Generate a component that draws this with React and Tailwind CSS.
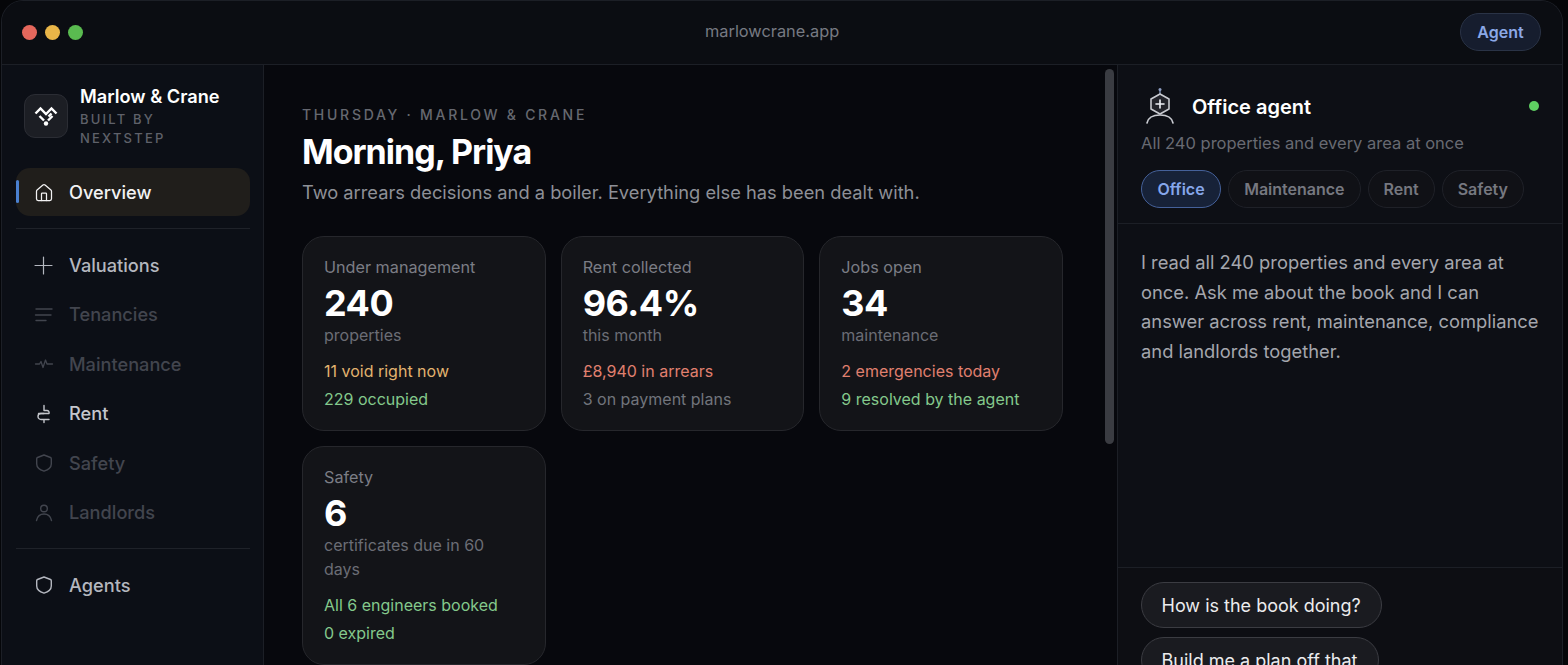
import { House, Plus } from "lucide-react";

const navTop = [
  { label: "Valuations", icon: Plus, tone: "text-[#b4b7bf]", size: 29, sw: 1 },
  { label: "Tenancies", icon: LinesIcon, tone: "text-[#42454e]", size: 20, sw: 1.4 },
  { label: "Maintenance", icon: PulseIcon, tone: "text-[#42454e]", size: 20, sw: 1.3 },
  { label: "Rent", icon: RentIcon, tone: "text-[#c4c6cc]", size: 20, sw: 1.4 },
  { label: "Safety", icon: ShieldIcon, tone: "text-[#42454e]", size: 20, sw: 1.4 },
  { label: "Landlords", icon: PersonIcon, tone: "text-[#42454e]", size: 20, sw: 1.4 },
];

const cards = [
  {
    label: "Under management",
    value: "240",
    sub: "properties",
    lines: [
      ["11 void right now", "text-[#e2b36f]"],
      ["229 occupied", "text-[#84c98c]"],
    ],
  },
  {
    label: "Rent collected",
    value: "96.4%",
    sub: "this month",
    lines: [
      ["£8,940 in arrears", "text-[#e0806f]"],
      ["3 on payment plans", "text-[#71747c]"],
    ],
  },
  {
    label: "Jobs open",
    value: "34",
    sub: "maintenance",
    lines: [
      ["2 emergencies today", "text-[#e0806f]"],
      ["9 resolved by the agent", "text-[#84c98c]"],
    ],
  },
  {
    label: "Safety",
    value: "6",
    sub: "certificates due in 60 days",
    lines: [
      ["All 6 engineers booked", "text-[#84c98c]"],
      ["0 expired", "text-[#84c98c]"],
    ],
  },
];

const tabs = ["Maintenance", "Rent", "Safety"];

function IconBase({ size, strokeWidth, children }) {
  return (
    <svg width={size} height={size} viewBox="0 0 20 20" fill="none" stroke="currentColor" strokeWidth={strokeWidth} strokeLinecap="round" strokeLinejoin="round">
      {children}
    </svg>
  );
}

function LinesIcon(props) {
  return (
    <IconBase {...props}>
      <path d="M2 4h16M1.5 10h15.5M2 15.5h10" />
    </IconBase>
  );
}

function PulseIcon(props) {
  return (
    <IconBase {...props}>
      <path d="M1.5 10h4l1.5-2.5 2 6 2.5-7.5 1.5 4h5.5" />
    </IconBase>
  );
}

function RentIcon(props) {
  return (
    <IconBase {...props}>
      <path d="M10 1.5v5M4.5 9.5h10.5c.5-1.5-.5-3-2-3h-3" />
      <path d="M10 9.5H7a3 3 0 0 0 0 6h8M10 15.5v3" />
    </IconBase>
  );
}

function ShieldIcon(props) {
  return (
    <IconBase {...props}>
      <path d="M10 2l6.5 2.5c.5.2.8.6.8 1.2V11c0 3.5-3.5 6-7.3 7.2C6.2 17 2.7 14.5 2.7 11V5.7c0-.6.3-1 .8-1.2z" />
    </IconBase>
  );
}

function PersonIcon(props) {
  return (
    <IconBase {...props}>
      <circle cx="10" cy="5.5" r="3.3" />
      <path d="M2.5 17.5C3.5 13 6.5 11 10 11s6.5 2 7.5 6.5" />
    </IconBase>
  );
}

function Logo() {
  return (
    <svg width="24" height="22" viewBox="0 0 24 22" fill="none" stroke="white" strokeWidth="2.4" strokeLinejoin="miter">
      <path d="M1.5 8.500 6.500 3.500 12 9l5.500-5.500 5 5" />
      <path d="M5.500 11 10 15.500" />
      <path d="M18.500 11 14 15.500" />
      <path d="M17.500 8.500 14.500 11.500" />
      <circle cx="12" cy="18.500" r="2.200" fill="white" stroke="none" />
    </svg>
  );
}

function AgentIcon() {
  return (
    <svg width="28" height="36" viewBox="6 6 28 36" fill="none" stroke="#c8cad0" strokeWidth="1.6" strokeLinecap="round" strokeLinejoin="round" className="ml-[5px]">
      <path d="M20 8v4" stroke="#6f7f9f" />
      <circle cx="20" cy="7.500" r="1.500" fill="#8f9fc4" stroke="none" />
      <path d="M20 12l9 5v10l-9 5-9-5V17z" fill="#22232a" />
      <path d="M20 18v8M16 22h8" stroke="#f0f2f8" strokeWidth="1.600" />
      <path d="M7 41c1-5 6-8 13-8s12 3 13 8" />
    </svg>
  );
}

function NavItem({ label, icon: Icon, tone, size, sw }) {
  return (
    <div className={`flex h-[49.5px] items-center text-[18.2px] font-medium ${tone}`}>
      <span className="flex w-[53px] justify-center pl-[2px]">
        <Icon size={size} strokeWidth={sw} />
      </span>
      <span>{label}</span>
    </div>
  );
}

function StatCard({ label, value, sub, lines }) {
  return (
    <div className="rounded-[22px] border border-[#26272c] bg-[#131418] pt-[20px] pr-[26px] pb-[21px] pl-[21px]">
      <div className="text-[16.2px] leading-[20px] text-[#7b7d85]">{label}</div>
      <div className="mt-[6px] text-[36px] leading-[40px] font-bold tracking-[-0.5px] text-white">{value}</div>
      <div className="text-[16px] leading-[24px] text-[#6b6d75]">{sub}</div>
      <div className="mt-[14px] flex flex-col gap-[8px]">
        {lines.map(([text, color]) => (
          <div key={text} className={`text-[16px] leading-[20px] whitespace-nowrap ${color}`}>
            {text}
          </div>
        ))}
      </div>
    </div>
  );
}

export default function App() {
  return (
    <div className="h-[665px] overflow-hidden bg-[#050609] pr-[5px] pl-[1px] font-['Inter',sans-serif]">
      <div className="flex h-[700px] flex-col overflow-hidden rounded-t-[22px] border border-b-0 border-[#1c1f26] bg-[#0b0d13]">
        <header className="relative flex h-[64px] shrink-0 items-center justify-between border-b border-[#1c1f26] bg-[#0b0d12] pr-[21px] pb-[1px] pl-[20px]">
          <div className="flex gap-[8px]">
            <span className="h-[15px] w-[15px] rounded-full bg-[#e5675c]" />
            <span className="h-[15px] w-[15px] rounded-full bg-[#e9b548]" />
            <span className="h-[15px] w-[15px] rounded-full bg-[#5abb50]" />
          </div>
          <div className="absolute top-[19px] left-[703px] text-[16.35px] leading-[22px] text-[#777a82]">marlowcrane.app</div>
          <button className="flex h-[38px] w-[81px] items-center justify-center rounded-full border border-[#2a3346] bg-[#161d2e] text-[16px] font-semibold text-[#8ba8e6]">
            Agent
          </button>
        </header>

        <div className="flex min-h-0 flex-1">
          <aside className="flex w-[262px] shrink-0 flex-col border-r border-[#1c1f26] bg-[#0c0f16] pr-[13px] pl-[14px]">
            <div className="flex items-start gap-[12px] pt-[20.5px] pl-[8px]">
              <div className="mt-[8px] flex h-[44px] w-[44px] shrink-0 items-center justify-center rounded-[11px] border border-[#2b2d34] bg-[#1c1e24]">
                <Logo />
              </div>
              <div>
                <div className="text-[18.2px] leading-[20px] font-semibold text-white">Marlow &amp; Crane</div>
                <div className="mt-[4px] w-[120px] text-[13px] leading-[19px] font-medium tracking-[0.17em] text-[#5f616a]">BUILT BY NEXTSTEP</div>
              </div>
            </div>

            <div className="relative mt-[20.5px] flex h-[48px] items-center rounded-[14px] bg-[#201e1b] pt-[1px] text-[18.2px] font-medium text-[#f2f2f3]">
              <span className="absolute top-[12px] left-0 h-[23px] w-[3px] rounded-full bg-[#4a80d0]" />
              <span className="flex w-[53px] justify-center pl-[2px]">
                <House size={20} strokeWidth={1.5} />
              </span>
              <span>Overview</span>
            </div>

            <div className="mt-[12px] mb-[11.5px] h-px bg-[#1f2229]" />

            <nav>
              {navTop.map((item) => (
                <NavItem key={item.label} {...item} />
              ))}
            </nav>

            <div className="mt-[10px] mb-[12px] h-px bg-[#1f2229]" />

            <NavItem label="Agents" icon={ShieldIcon} tone="text-[#b4b7bf]" size={20} sw={1.4} />
          </aside>

          <main className="relative min-w-0 flex-1 bg-[#07080d] pt-[41px] pr-[54px] pl-[38px]">
            <div className="text-[14px] leading-[18px] font-medium tracking-[0.195em] text-[#666870]">THURSDAY · MARLOW &amp; CRANE</div>
            <h1 className="mt-[8px] text-[34px] leading-[40px] font-bold tracking-[-1px] text-white">Morning, Priya</h1>
            <p className="mt-[8px] text-[18.27px] leading-[24px] text-[#8e9097]">Two arrears decisions and a boiler. Everything else has been dealt with.</p>
            <div className="mt-[32px] grid grid-cols-3 items-start gap-x-[15px] gap-y-[15px]">
              {cards.map((card) => (
                <StatCard key={card.label} {...card} />
              ))}
            </div>
            <div className="absolute top-[4px] right-[3px] h-[375px] w-[9px] rounded-full bg-[#3a3c42]" />
          </main>

          <section className="flex w-[445px] shrink-0 flex-col border-l border-[#1c1f26] bg-[#0d0f15]">
            <div className="border-b border-[#1c1f26] px-[23px] pt-[23px] pb-[15px]">
              <div className="flex items-center justify-between">
                <div className="flex items-center gap-[18px]">
                  <AgentIcon />
                  <div className="pt-[2px] text-[20px] font-semibold text-white">Office agent</div>
                </div>
                <span className="h-[10px] w-[10px] rounded-full bg-[#5fcf62]" />
              </div>
              <div className="mt-[8px] text-[16.5px] leading-[22px] text-[#686a72]">All 240 properties and every area at once</div>
              <div className="mt-[16px] flex gap-[7px]">
                <span className="flex h-[38px] items-center rounded-full border border-[#45619a] bg-[#172238] px-[15.5px] text-[16px] font-semibold text-[#86a6ea]">Office</span>
                {tabs.map((tab) => (
                  <span key={tab} className="flex h-[38px] items-center rounded-full border border-[#1f2128] bg-[#101116] px-[15px] text-[16px] font-semibold text-[#767880]">
                    {tab}
                  </span>
                ))}
              </div>
            </div>
            <div className="h-[343px] shrink-0 px-[23px] pt-[24px] text-[18.35px] leading-[29.7px] text-[#a4a6ad]">
              I read all 240 properties and every area at once. Ask me about the book and I can answer across rent, maintenance, compliance and landlords together.
            </div>
            <div className="flex flex-col items-start gap-[9px] border-t border-[#1c1f26] bg-[#0d0e13] px-[23px] pt-[14px]">
              <span className="flex h-[46px] items-center rounded-full border border-[#3b3c42] bg-[#1a1b20] pr-[20.5px] pl-[19.5px] text-[18px] text-[#ececee]">How is the book doing?</span>
              <span className="flex h-[46px] items-center rounded-full border border-[#3b3c42] bg-[#1a1b20] pr-[20.5px] pl-[19.5px] text-[18px] text-[#ececee]">Build me a plan off that</span>
            </div>
          </section>
        </div>
      </div>
    </div>
  );
}
